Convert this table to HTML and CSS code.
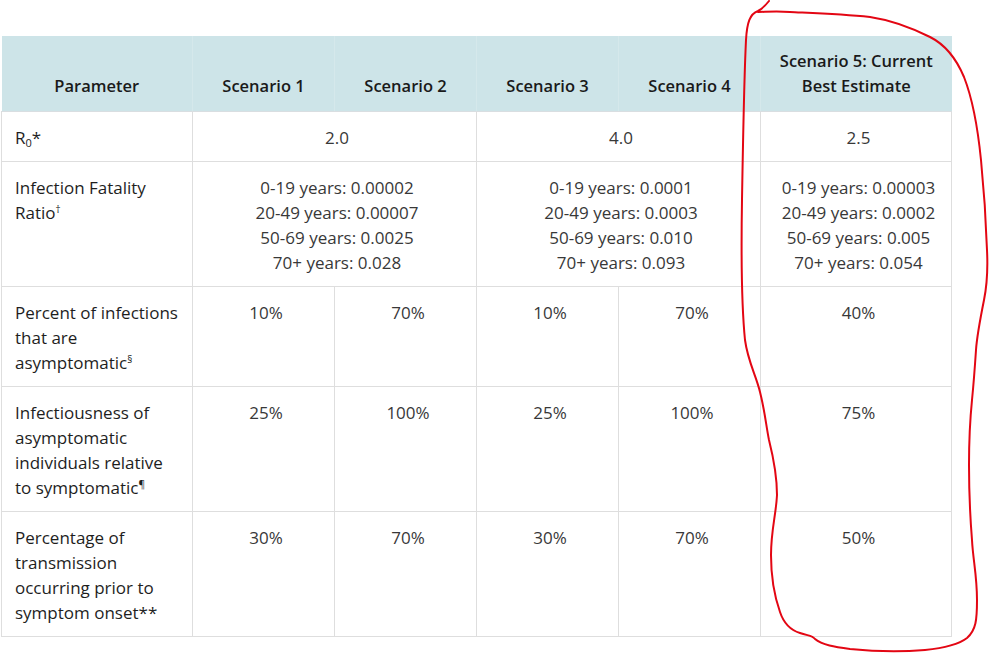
FILE: index.html
```html
<!DOCTYPE html>
<html lang="en">
<head>
<meta charset="utf-8">
<title>COVID-19 Pandemic Planning Scenarios</title>
<link rel="stylesheet" href="styles.css">
</head>
<body>
<div class="page">
  <table class="params">
    <colgroup>
      <col class="c-label">
      <col class="c-s">
      <col class="c-s">
      <col class="c-s">
      <col class="c-s">
      <col class="c-best">
    </colgroup>
    <thead>
      <tr>
        <th>Parameter</th>
        <th>Scenario 1</th>
        <th>Scenario 2</th>
        <th>Scenario 3</th>
        <th>Scenario 4</th>
        <th>Scenario 5: Current Best Estimate</th>
      </tr>
    </thead>
    <tbody>
      <tr class="r-short">
        <td class="label">R<sub>0</sub>*</td>
        <td colspan="2">2.0</td>
        <td colspan="2">4.0</td>
        <td>2.5</td>
      </tr>
      <tr>
        <td class="label">Infection Fatality Ratio<sup>†</sup></td>
        <td colspan="2">0-19 years: 0.00002<br>20-49 years: 0.00007<br>50-69 years: 0.0025<br>70+ years: 0.028</td>
        <td colspan="2">0-19 years: 0.0001<br>20-49 years: 0.0003<br>50-69 years: 0.010<br>70+ years: 0.093</td>
        <td>0-19 years: 0.00003<br>20-49 years: 0.0002<br>50-69 years: 0.005<br>70+ years: 0.054</td>
      </tr>
      <tr>
        <td class="label">Percent of infections that are asymptomatic<sup>§</sup></td>
        <td>10%</td>
        <td>70%</td>
        <td>10%</td>
        <td>70%</td>
        <td>40%</td>
      </tr>
      <tr>
        <td class="label">Infectiousness of asymptomatic individuals relative to symptomatic<sup>¶</sup></td>
        <td>25%</td>
        <td>100%</td>
        <td>25%</td>
        <td>100%</td>
        <td>75%</td>
      </tr>
      <tr>
        <td class="label">Percentage of transmission occurring prior to symptom onset**</td>
        <td>30%</td>
        <td>70%</td>
        <td>30%</td>
        <td>70%</td>
        <td>50%</td>
      </tr>
    </tbody>
  </table>
</div>
<svg class="mark" width="990" height="653" viewBox="0 0 990 653" aria-hidden="true">
  <path d="M769 1 C765 6 762 9 758 11 C750 14 747 22 746 40 C744 80 743 140 742 200 C741 260 742 310 745 340 C748 362 756 375 760 392 C765 412 766 425 769 440 C774 460 777 475 777 495 C776 515 771 530 771 555 C771 575 774 595 780 612 C784 624 790 630 800 633 C808 636 812 635 815 639 C822 645 835 647 850 649 C870 651 900 652 925 650 C945 648 958 645 967 638 C976 630 977 620 977 600 C977 575 973 560 972 540 C970 515 969 490 969 465 C969 440 970 420 972 400 C974 380 975 365 976 350 C977 335 980 320 984 300 C987 285 988 270 987 250 C986 220 984 190 981 160 C978 130 973 100 964 77 C956 58 946 45 930 37 C910 27 890 20 870 17 C840 14 810 13 790 12 C775 11 765 12 758 12"/>
</svg>
</body>
</html>
```

FILE: styles.css
```css
html, body {
  margin: 0;
  padding: 0;
  background: #ffffff;
}

body {
  width: 990px;
  height: 653px;
  overflow: hidden;
  position: relative;
  font-family: "Open Sans", "Noto Sans", "DejaVu Sans", sans-serif;
  font-size: 17px;
  line-height: 25px;
  color: #333333;
}

.page {
  padding: 36px 0 0 1px;
}

.params {
  border-collapse: collapse;
  table-layout: fixed;
  width: 950px;
}

.c-label { width: 191px; }
.c-s { width: 142px; }
.c-best { width: 191px; }

.params th {
  background: #cde4e8;
  color: #1a1a1a;
  font-size: 16.5px;
  font-weight: 600;
  text-align: center;
  vertical-align: bottom;
  padding: 12px 12px 13px;
  border-left: 1px solid #d5e8eb;
  border-bottom: 1px solid #d9dee1;
}

.params th:first-child {
  border-left: none;
}

.params td {
  border: 1px solid #dedede;
  padding: 13px 8px 11px 13px;
  text-align: center;
  vertical-align: top;
  color: #383838;
}

.params td.label {
  text-align: left;
  color: #1e1e1e;
  padding-right: 12px;
}

.params sub {
  font-size: 11px;
  line-height: 1;
  vertical-align: -3px;
}

.params sup {
  font-size: 10px;
  line-height: 1;
  vertical-align: 6px;
}

.mark {
  position: absolute;
  left: 0;
  top: 0;
  pointer-events: none;
}

.mark path {
  fill: none;
  stroke: #e30613;
  stroke-width: 2;
  stroke-linecap: round;
  stroke-linejoin: round;
}
```
